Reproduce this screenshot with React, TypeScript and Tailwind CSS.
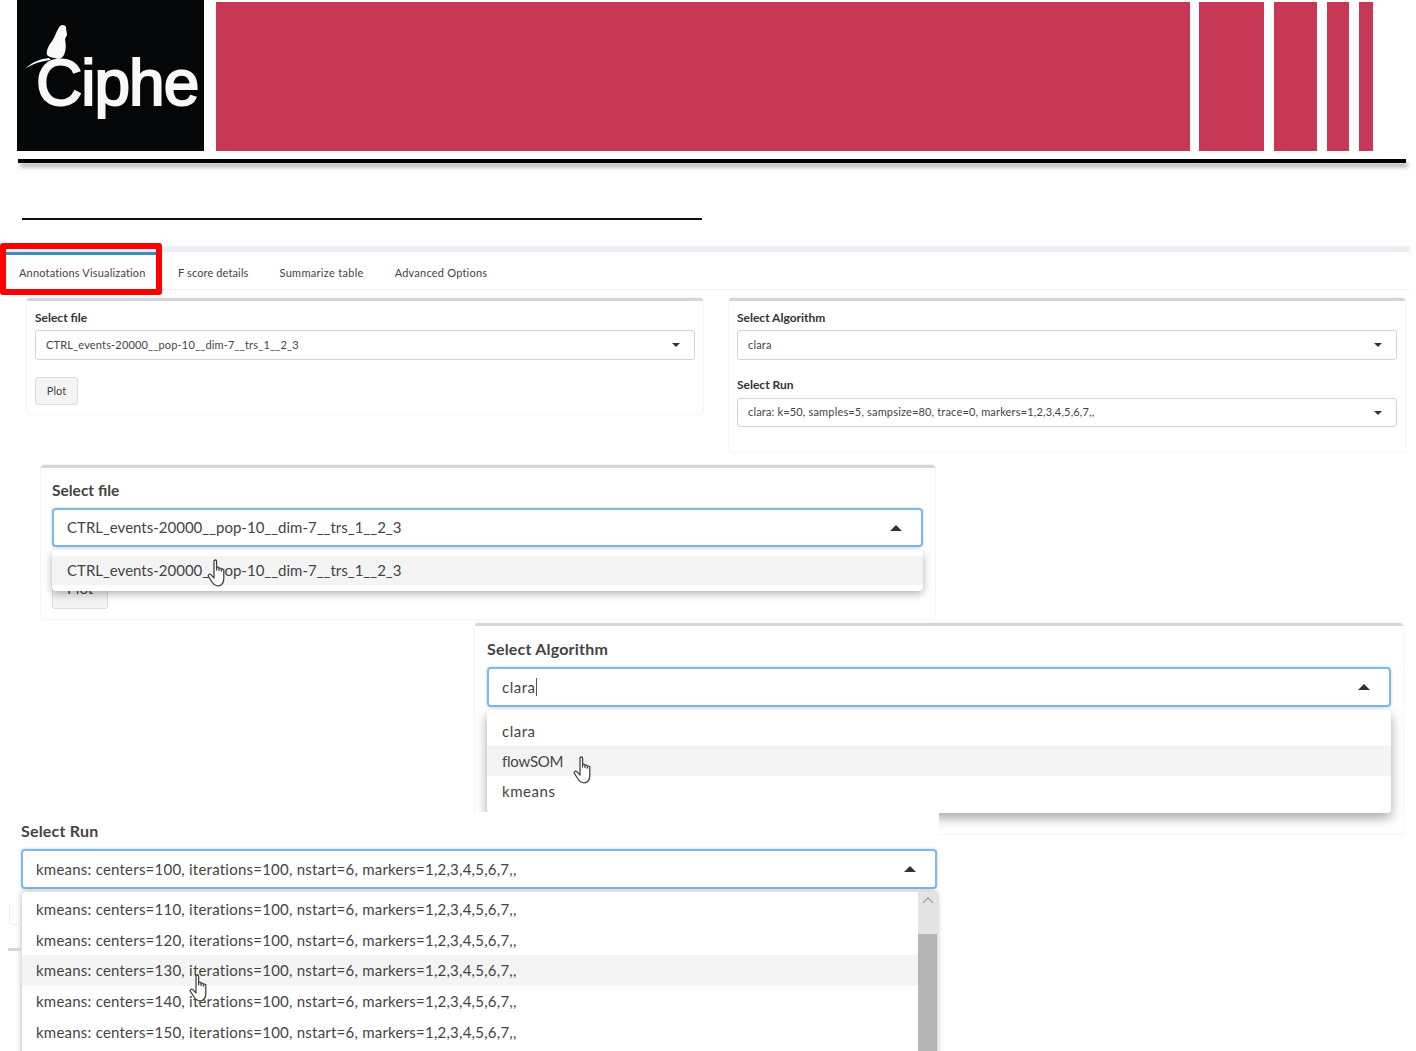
import React from "react";

const font = { fontFamily: "Lato, 'Noto Sans', sans-serif" };

function Hand({ className }: { className: string }) {
  return (
    <svg viewBox="0 0 18 29" className={className} fill="#fff" stroke="#444" strokeWidth="1.3" strokeLinejoin="round">
      <path d="M7 16V3.2C7 1.6 9.6 1.6 9.6 3.2V12V10.2C9.6 8.8 12 8.8 12 10.2V12.6V11C12 9.7 14.4 9.7 14.4 11V13.2V12C14.4 10.8 16.8 10.8 16.8 12V20C16.8 25 15 27.8 11 27.8C8 27.8 6.6 26.6 5 24L1.4 18.4C0.6 16.8 2.6 15.4 3.8 16.6L7 20Z" />
    </svg>
  );
}

function Caret({ up = false }: { up?: boolean }) {
  return up ? (
    <span className="h-0 w-0 border-x-[6px] border-b-[6px] border-x-transparent border-b-[#333]" />
  ) : (
    <span className="h-0 w-0 border-x-[4.5px] border-t-[4px] border-x-transparent border-t-[#333]" />
  );
}

function SmallSelect({ value, className = "" }: { value: string; className?: string }) {
  return (
    <div className={`flex h-[30px] items-center justify-between rounded-[3px] border border-[#d4d4d4] pl-[10px] pr-[14px] text-[11px] tracking-[0.17px] text-[#444] ${className}`}>
      <span>{value}</span>
      <Caret />
    </div>
  );
}

function BigSelect({ value, cursor = false, className = "" }: { value: string; cursor?: boolean; className?: string }) {
  return (
    <div className={`flex h-[39px] items-center justify-between rounded-[4px] border-2 border-[#7fb9e8] bg-white pl-[13px] pr-[19px] text-[15px] text-[#444] shadow-[0_0_3px_#a8d0f0] ${className}`}>
      <span className="flex items-center">
        {value}
        {cursor && <span className="ml-px h-[18px] w-px bg-[#555]" />}
      </span>
      <Caret up />
    </div>
  );
}

const runs = [110, 120, 130, 140, 150];

export default function App() {
  return (
    <div className="relative h-[1051px] w-[1416px] overflow-hidden bg-white" style={font}>
      {/* Header */}
      <header className="flex h-[151px] pl-[17px]">
        <div className="relative h-[151px] w-[187px] overflow-hidden bg-[#050608]">
          <svg viewBox="0 0 50 50" className="absolute left-[7px] top-[22px] h-[50px] w-[50px]" fill="#fafafa">
            <path d="M36 4C38 2 41 3 42 5C42 8 43 11 43 13L41 17C42 22 42 27 41 30C40 34 38 36 35 37C31 36 26 36 23 33C22 30 24 25 26 22C29 18 31 14 33 9C34 7 35 5 36 4Z" />
            <path d="M25 36C17 37 9 39 1 47C8 42 17 39 27 38Z" />
          </svg>
          <span className="absolute left-[19px] top-[46px] text-[64px] font-normal leading-[74px] tracking-[-1px] text-[#f8f8f8] [-webkit-text-stroke:2px_#f8f8f8]" style={{ fontFamily: "'Liberation Sans', sans-serif" }}>
            Ciphe
          </span>
        </div>
        <div className="ml-[12px] mt-[2px] flex h-[149px]">
          <div className="w-[974px] bg-[#c63855]" />
          <div className="ml-[9px] w-[65px] bg-[#c63855]" />
          <div className="ml-[10px] w-[43px] bg-[#c63855]" />
          <div className="ml-[10px] w-[22px] bg-[#c63855]" />
          <div className="ml-[10px] w-[14px] bg-[#c63855]" />
        </div>
      </header>
      <div className="ml-[18px] mt-[8px] h-[4px] w-[1388px] bg-black shadow-[2px_4px_4px_rgba(0,0,0,0.35)]" />
      <div className="ml-[22px] mt-[55px] h-[2px] w-[680px] bg-[#111]" />

      {/* Tabs */}
      <div className="ml-[5px] mt-[26px] w-[1405px] border-b border-[#f0f0f0]">
        <div className="h-[6px] bg-[#ecf0f5]" />
        <div className="flex h-[37px] text-[11px] tracking-[0.17px] text-[#444]">
          <div className="flex w-[151px] items-center border-t-[3px] border-[#3c8dbc] pl-[14px] pt-[3px]">Annotations Visualization</div>
          <div className="ml-[22px] flex items-center pt-[6px] tracking-[0.12px]">F score details</div>
          <div className="ml-[31px] flex items-center pt-[6px] tracking-[0.3px]">Summarize table</div>
          <div className="ml-[31px] flex items-center pt-[6px] tracking-[0.22px]">Advanced Options</div>
        </div>
      </div>

      {/* Top panels */}
      <div className="ml-[27px] mt-[8px] flex items-start gap-[26px]">
        <section className="h-[116px] w-[676px] rounded-[3px] border-t-[3px] border-[#d2d6de] px-[8px] pt-[10px] shadow-[0_0_2px_rgba(0,0,0,0.14)]">
          <div className="mb-[5px] text-[12px] font-bold leading-[14px] text-[#333]">Select file</div>
          <SmallSelect value="CTRL_events-20000__pop-10__dim-7__trs_1__2_3" />
          <button className="mt-[17px] block h-[28px] w-[43px] rounded-[3px] border border-[#ddd] bg-[#f4f4f4] text-[11px] text-[#444]">Plot</button>
        </section>
        <section className="h-[154px] w-[676px] rounded-[3px] border-t-[3px] border-[#d2d6de] px-[8px] pt-[10px] shadow-[0_0_2px_rgba(0,0,0,0.14)]">
          <div className="mb-[5px] text-[12px] font-bold leading-[14px] text-[#333]">Select Algorithm</div>
          <SmallSelect value="clara" />
          <div className="mb-[6px] mt-[18px] text-[12px] font-bold leading-[14px] text-[#333]">Select Run</div>
          <SmallSelect value="clara: k=50, samples=5, sampsize=80, trace=0, markers=1,2,3,4,5,6,7,," className="!h-[29px] tracking-[0.1px]" />
        </section>
      </div>

      {/* Pasted: Select file */}
      <section className="absolute left-[41px] top-[465px] h-[154px] w-[894px] rounded-[3px] border-t-[3px] border-[#d2d6de] pl-[11px] pr-[12px] pt-[12px] shadow-[0_0_2px_rgba(0,0,0,0.14)]">
        <div className="mb-[8px] text-[15.5px] font-bold leading-[20px] text-[#444]">Select file</div>
        <BigSelect value="CTRL_events-20000__pop-10__dim-7__trs_1__2_3" className="h-[38px]" />
        <div className="relative">
          <div className="absolute left-0 top-[26px] flex h-[36px] w-[56px] items-center justify-center rounded-[3px] border border-[#ddd] bg-[#f4f4f4] pb-[6px] text-[15px] text-[#444]">Plot</div>
          <div className="absolute left-0 top-[3px] z-10 h-[41px] w-full rounded-[4px] bg-white pt-[6px] shadow-[0_3px_8px_rgba(0,0,0,0.3)]">
            <div className="flex h-[29px] items-center bg-[#f4f4f4] pl-[15px] text-[15px] text-[#444]">CTRL_events-20000__pop-10__dim-7__trs_1__2_3</div>
          </div>
        </div>
      </section>
      <Hand className="absolute left-[206px] top-[558px] z-20 h-[29px] w-[20px]" />

      {/* Pasted: Select Algorithm */}
      <section className="absolute left-[475px] top-[623px] h-[211px] w-[928px] rounded-[3px] border-t-[3px] border-[#d2d6de] px-[12px] pt-[13px] shadow-[0_0_2px_rgba(0,0,0,0.14)]">
        <div className="mb-[8px] text-[16px] font-bold leading-[20px] tracking-[0.2px] text-[#444]">Select Algorithm</div>
        <BigSelect value="clara" cursor className="h-[40px] tracking-[0.5px]" />
        <div className="mt-[3px] h-[103px] rounded-[4px] bg-white pt-[6px] text-[15px] text-[#444] shadow-[0_5px_12px_rgba(0,0,0,0.35)]">
          <div className="flex h-[30px] items-center pl-[15px] tracking-[0.5px]">clara</div>
          <div className="flex h-[30px] items-center bg-[#f4f4f4] pl-[15px] tracking-[-0.25px]">flowSOM</div>
          <div className="flex h-[30px] items-center pl-[15px] tracking-[0.55px]">kmeans</div>
        </div>
      </section>
      <Hand className="absolute left-[572px] top-[755px] z-20 h-[29px] w-[20px]" />

      {/* Pasted: Select Run */}
      <section className="absolute left-[9px] top-[812px] h-[239px] w-[930px] bg-white pl-[12px] pr-[2px] pt-[9px]">
        <div className="mb-[8px] text-[16px] font-bold leading-[20px] tracking-[0.2px] text-[#444]">Select Run</div>
        <BigSelect value="kmeans: centers=100, iterations=100, nstart=6, markers=1,2,3,4,5,6,7,," className="h-[40px] tracking-[0.23px]" />
        <div className="ml-px mt-[3px] flex h-[170px] rounded-t-[4px] bg-white text-[15px] tracking-[0.23px] text-[#444] shadow-[0_0_6px_rgba(0,0,0,0.3)]">
          <div className="flex-1 pt-[2px]">
            {runs.map((n) => (
              <div key={n} className={`flex h-[30.7px] items-center pl-[14px] ${n === 130 ? "bg-[#f4f4f4]" : ""}`}>
                kmeans: centers={n}, iterations=100, nstart=6, markers=1,2,3,4,5,6,7,,
              </div>
            ))}
          </div>
          <div className="flex w-[19px] flex-col bg-[#b5b5b5]">
            <div className="flex h-[42px] justify-center bg-[#e4e4e4] pt-[4px]">
              <svg viewBox="0 0 12 8" className="h-[8px] w-[12px]" fill="none" stroke="#a5a5a5" strokeWidth="1.4"><path d="M1 7L6 2L11 7" /></svg>
            </div>
          </div>
        </div>
      </section>
      <Hand className="absolute left-[188px] top-[973px] z-20 h-[29px] w-[20px]" />

      {/* Remains of the page left of the pasted Select Run */}
      <div className="absolute left-[9px] top-[905px] h-[20px] w-[12px] rounded-bl-[3px] border-b border-l border-[#eee]" />
      <div className="absolute left-[8px] top-[948px] h-[3px] w-[13px] bg-[#d2d6de]" />

      {/* Callout around the active tab */}
      <div className="absolute left-0 top-[243px] h-[52px] w-[162px] rounded-[3px] border-[6px] border-[#ff0000]" />
    </div>
  );
}
